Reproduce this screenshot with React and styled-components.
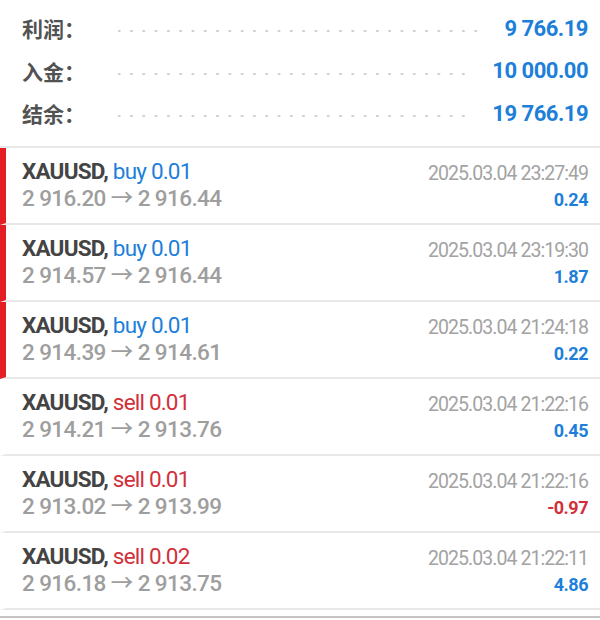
import React from "react";
import styled, { createGlobalStyle } from "styled-components";

const GlobalStyle = createGlobalStyle`
  body {
    margin: 0;
    background: #fff;
    font-family: Roboto, "Noto Sans CJK SC", sans-serif;
  }
`;

const BLUE = "#1d7fd9";
const RED = "#d2303a";

const Page = styled.div`
  width: 600px;
  height: 620px;
  overflow: hidden;
  background: #fff;
`;

const Summary = styled.div`
  padding: 7px 12px 11px 22px;
  border-bottom: 2px solid #e8e8e8;
`;

const SumRow = styled.div`
  display: flex;
  align-items: center;
  height: 42.5px;
`;

const Label = styled.span`
  width: 96px;
  flex: none;
  font-family: "Noto Sans CJK SC", sans-serif;
  font-size: 21px;
  font-weight: 700;
  color: #525252;
`;

const Leader = styled.span`
  flex: 1;
  height: 2px;
  margin: 6px 20px 0 0;
  background-image: radial-gradient(circle, #cccccc 1px, transparent 1.3px);
  background-size: 12.3px 2px;
  background-position: -5px 0;
  background-repeat: repeat-x;
`;

const SumValue = styled.span`
  font-size: 22px;
  font-weight: 700;
  letter-spacing: -0.5px;
  color: ${BLUE};
`;

const Trade = styled.div`
  display: flex;
  justify-content: space-between;
  box-sizing: border-box;
  height: 77px;
  padding: 0 12px 0 16px;
  border-left: 6px solid ${(p) => (p.$open ? "#e31e24" : "transparent")};
  border-bottom: 2px solid #e8e8e8;
`;

const Left = styled.div`
  display: flex;
  flex-direction: column;
  padding-top: 10px;
`;

const Symbol = styled.div`
  font-size: 22.5px;
  line-height: 27px;
  letter-spacing: -0.8px;
  color: #444;
  font-weight: 700;
`;

const Side = styled.span`
  font-weight: 400;
  color: ${(p) => (p.$sell ? RED : BLUE)};
`;

const Prices = styled.div`
  font-size: 22.5px;
  line-height: 27px;
  letter-spacing: -0.6px;
  font-weight: 500;
  color: #9e9e9e;
`;

const Right = styled.div`
  display: flex;
  flex-direction: column;
  align-items: flex-end;
  padding-top: 15px;
`;

const Time = styled.div`
  font-size: 19.5px;
  line-height: 22px;
  letter-spacing: -0.95px;
  color: #a3a3a3;
`;

const Profit = styled.div`
  margin-top: 4px;
  font-size: 18px;
  line-height: 22px;
  font-weight: 700;
  letter-spacing: -0.5px;
  color: ${(p) => (p.$neg ? RED : BLUE)};
`;

const Footer = styled.div`
  margin-top: 6px;
  border-top: 2px solid #c4c4c4;
  height: 20px;
`;

const summary = [
  ["利润：", "9 766.19"],
  ["入金：", "10 000.00"],
  ["结余：", "19 766.19"],
];

const trades = [
  { side: "buy", vol: "0.01", open: "2 916.20", close: "2 916.44", time: "2025.03.04 23:27:49", profit: "0.24", bar: true },
  { side: "buy", vol: "0.01", open: "2 914.57", close: "2 916.44", time: "2025.03.04 23:19:30", profit: "1.87", bar: true },
  { side: "buy", vol: "0.01", open: "2 914.39", close: "2 914.61", time: "2025.03.04 21:24:18", profit: "0.22", bar: true },
  { side: "sell", vol: "0.01", open: "2 914.21", close: "2 913.76", time: "2025.03.04 21:22:16", profit: "0.45" },
  { side: "sell", vol: "0.01", open: "2 913.02", close: "2 913.99", time: "2025.03.04 21:22:16", profit: "-0.97" },
  { side: "sell", vol: "0.02", open: "2 916.18", close: "2 913.75", time: "2025.03.04 21:22:11", profit: "4.86" },
];

export default function App() {
  return (
    <Page>
      <GlobalStyle />
      <Summary>
        {summary.map(([label, value]) => (
          <SumRow key={label}>
            <Label>{label}</Label>
            <Leader />
            <SumValue>{value}</SumValue>
          </SumRow>
        ))}
      </Summary>
      {trades.map((t, i) => (
        <Trade key={i} $open={t.bar}>
          <Left>
            <Symbol>
              XAUUSD, <Side $sell={t.side === "sell"}>{t.side} {t.vol}</Side>
            </Symbol>
            <Prices>
              {t.open} → {t.close}
            </Prices>
          </Left>
          <Right>
            <Time>{t.time}</Time>
            <Profit $neg={t.profit.startsWith("-")}>{t.profit}</Profit>
          </Right>
        </Trade>
      ))}
      <Footer />
    </Page>
  );
}
